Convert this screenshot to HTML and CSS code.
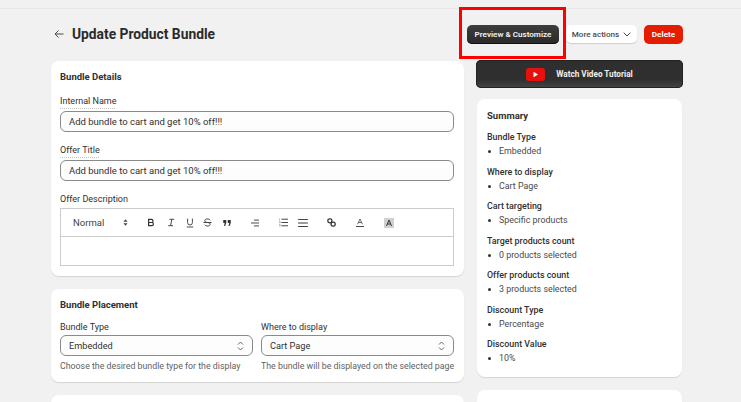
FILE: index.html
```html
<!DOCTYPE html>
<html lang="en">
<head>
<meta charset="utf-8">
<title>Update Product Bundle</title>
<link rel="stylesheet" href="styles.css">
</head>
<body>
<div class="topline"></div>
<main class="page">
  <header class="head">
    <div class="head-left">
      <svg class="back" width="10" height="10" viewBox="0 0 10 10"><path d="M9.500 5H1M4.500 1.500 1 5l3.500 3.500" fill="none" stroke="#4a4a4a" stroke-width="1"/></svg>
      <h1>Update Product Bundle</h1>
    </div>
    <div class="actions">
      <button class="btn dark">Preview &amp; Customize</button>
      <button class="btn plain">More actions
        <svg width="8" height="5" viewBox="0 0 8 5"><path d="M.7.7 4 4l3.300-3.300" fill="none" stroke="#444" stroke-width="1"/></svg>
      </button>
      <button class="btn danger">Delete</button>
    </div>
  </header>
  <div class="columns">
    <div class="col-main">
      <section class="card details">
        <h2>Bundle Details</h2>
        <div class="field">
          <label class="dotted">Internal Name</label>
          <div class="input">Add bundle to cart and get 10% off!!!</div>
        </div>
        <div class="field">
          <label class="dotted">Offer Title</label>
          <div class="input">Add bundle to cart and get 10% off!!!</div>
        </div>
        <div class="field">
          <label>Offer Description</label>
          <div class="editor">
            <div class="toolbar">
              <span class="tb-normal">Normal</span>
              <svg class="tb-sort" width="5" height="7" viewBox="0 0 6 8"><path d="M3 0 5.500 3H.5zM3 8 .5 5h5z" fill="#444"/></svg>
              <svg class="tb-i m12" width="8" height="9" viewBox="0 0 10 10"><path d="M2 1h3.500a2 2 0 0 1 0 4H2zM2 5h4a2 2 0 0 1 0 4H2z" fill="none" stroke="#333" stroke-width="1.500"/></svg>
              <svg class="tb-i m11" width="8" height="9" viewBox="0 0 10 10"><path d="M3 1h6M1.500 9h6M6 1 4.500 9" fill="none" stroke="#333" stroke-width="1.100"/></svg>
              <svg class="tb-i m9" width="8" height="10" viewBox="0 0 10 11"><path d="M2 0v5a3 3 0 0 0 6 0V0M1 10.500h8" fill="none" stroke="#333" stroke-width="1.100"/></svg>
              <svg class="tb-i m11" width="9" height="9" viewBox="0 0 10 10"><path d="M8 2.500C7 .5 2 .5 2 3c0 1 1 1.700 3 2 2 .3 3 1 3 2 0 2.500-5 2.500-6 .5M.5 5h9" fill="none" stroke="#444" stroke-width="1.100"/></svg>
              <svg class="tb-i m20" width="8" height="6" viewBox="0 0 10 8"><path d="M0 0h4v4L2.500 8H1l1-4H0zM6 0h4v4L8.500 8H7l1-4H6z" fill="#333"/></svg>
              <svg class="tb-i m20" width="8" height="8" viewBox="0 0 11 9"><path d="M4 .5h7M0 4.500h11M4 8.500h7" stroke="#333" stroke-width="1.200"/></svg>
              <svg class="tb-i m10" width="9" height="9" viewBox="0 0 11 10"><path d="M3 1h8M3 5h8M3 9h8" stroke="#333" stroke-width="1.100"/><path d="M.5 0v2.500M.2 4h1.300v1.500H.2M.2 7.500h1.300v2H.2" fill="none" stroke="#777" stroke-width=".7"/></svg>
              <svg class="tb-i m19" width="10" height="8" viewBox="0 0 11 9"><path d="M0 .5h11M0 4.500h11M0 8.500h11" stroke="#333" stroke-width="1.100"/></svg>
              <svg class="tb-i m20" width="9" height="9" viewBox="0 0 11 11"><g fill="none" stroke="#333" stroke-width="1.600"><rect x="1" y="1" width="5" height="5" rx="2.200"/><rect x="5" y="5" width="5" height="5" rx="2.200"/></g></svg>
              <svg class="tb-i m20" width="8" height="9" viewBox="0 0 9 10"><path d="M1.800 7 4.500 1l2.700 6M2.800 5h3.400" fill="none" stroke="#444" stroke-width=".9"/><path d="M0 9.500h9" stroke="#333"/></svg>
              <svg class="tb-i" width="10" height="10" viewBox="0 0 10 10"><rect width="10" height="10" fill="#d0d0d0"/><path d="M2.500 8 5 2l2.500 6M3.500 6h3" fill="none" stroke="#333" stroke-width="1"/></svg>
            </div>
            <div class="editor-body"></div>
          </div>
        </div>
      </section>
      <section class="card placement">
        <h2>Bundle Placement</h2>
        <div class="two">
          <div class="field">
            <label>Bundle Type</label>
            <div class="input select">Embedded
              <svg width="7" height="10" viewBox="0 0 7 10"><path d="M1 3.500 3.500 1 6 3.500M1 6.500 3.500 9 6 6.500" fill="none" stroke="#555" stroke-width=".9"/></svg>
            </div>
            <p class="help">Choose the desired bundle type for the display</p>
          </div>
          <div class="field">
            <label>Where to display</label>
            <div class="input select">Cart Page
              <svg width="7" height="10" viewBox="0 0 7 10"><path d="M1 3.500 3.500 1 6 3.500M1 6.500 3.500 9 6 6.500" fill="none" stroke="#555" stroke-width=".9"/></svg>
            </div>
            <p class="help">The bundle will be displayed on the selected page</p>
          </div>
        </div>
      </section>
      <section class="card stub"></section>
    </div>
    <aside class="col-side">
      <button class="video">
        <svg width="19" height="13" viewBox="0 0 19 13"><rect width="19" height="13" rx="3" fill="#e8100c"/><path d="M7.500 3.800v5.400L12 6.500z" fill="#fff"/></svg>
        Watch Video Tutorial
      </button>
      <section class="card summary">
        <h2>Summary</h2>
        <dl>
          <div class="item"><dt>Bundle Type</dt><dd>Embedded</dd></div>
          <div class="item"><dt>Where to display</dt><dd>Cart Page</dd></div>
          <div class="item"><dt>Cart targeting</dt><dd>Specific products</dd></div>
          <div class="item"><dt>Target products count</dt><dd>0 products selected</dd></div>
          <div class="item"><dt>Offer products count</dt><dd>3 products selected</dd></div>
          <div class="item"><dt>Discount Type</dt><dd>Percentage</dd></div>
          <div class="item"><dt>Discount Value</dt><dd>10%</dd></div>
        </dl>
      </section>
      <section class="card stub side-stub"></section>
    </aside>
  </div>
</main>
<div class="highlight"></div>
</body>
</html>
```
FILE: styles.css
```css
* { box-sizing: border-box; }
html, body { height: 100%; }
body {
  margin: 0;
  height: 402px;
  overflow: hidden;
  background: #f1f1f1;
  font-family: Roboto, "Open Sans", sans-serif;
  font-size: 9.500px;
  line-height: 12px;
  color: #303030;
  position: relative;
}
.topline { height: 9px; border-bottom: 1px solid #e8e8e8; }
.page { padding: 0 58px 0 51px; }
.head { display: flex; justify-content: space-between; align-items: center; height: 52px; }
.head-left { display: flex; align-items: center; gap: 8px; margin-left: 3px; margin-top: -2px; }
h1 { margin: 0; font-size: 13.800px; font-weight: 700; color: #2b2b2b; line-height: 18px; }
.actions { display: flex; align-items: center; gap: 7px; margin-top: -2px; }
.btn {
  font-family: inherit;
  font-size: 8.100px;
  font-weight: 600;
  border: 0;
  border-radius: 5px;
  height: 18px;
  padding: 0;
  display: inline-flex;
  align-items: center;
  justify-content: center;
}
.dark { width: 92px; height: 19px; background: linear-gradient(#3d3d3d, #2a2a2a); color: #f2f2f2; box-shadow: inset 0 -1px 0 #111; }
.plain { width: 71px; background: #fff; color: #4a4a4a; gap: 4px; font-weight: 500; box-shadow: 0 1px 1px rgba(0,0,0,.15); }
.danger { width: 39px; height: 19px; background: #e51c00; color: #fff; font-weight: 700; }
.columns { display: flex; align-items: flex-start; gap: 12px; }
.col-main { width: 413px; display: flex; flex-direction: column; gap: 13px; }
.col-side { width: 207px; display: flex; flex-direction: column; align-items: center; }
.card { background: #fff; border-radius: 8px; box-shadow: 0 1px 1px rgba(0,0,0,.12); width: 100%; }
h2 { margin: 0; font-size: 9.500px; font-weight: 700; line-height: 12px; color: #303030; }
.details { height: 215px; padding: 10px 10px 0 9px; }
.field label { display: block; line-height: 12px; font-size: 9px; }
.details .field { margin-top: 12px; }
.dotted { width: max-content; text-decoration: underline dotted #c4c4c4; text-underline-offset: 4px; text-decoration-skip-ink: none; }
.input {
  height: 21px;
  margin-top: 4px;
  border: 1px solid #8a8a8a;
  border-radius: 6px;
  padding: 0 8px;
  display: flex;
  align-items: center;
  justify-content: space-between;
  background: #fdfdfd;
}
.editor { margin-top: 3px; border: 1px solid #ccc; }
.toolbar { height: 28px; border-bottom: 1px solid #ccc; display: flex; align-items: center; padding-left: 12px; color: #444; }
.tb-normal { width: 50px; }
.tb-sort { margin-right: 19px; flex: none; }
.tb-i { flex: none; }
.m9 { margin-right: 9px; }
.m10 { margin-right: 10px; }
.m11 { margin-right: 11px; }
.m12 { margin-right: 12px; }
.m19 { margin-right: 19px; }
.m20 { margin-right: 20px; }
.editor-body { height: 28px; }
.placement { height: 93px; padding: 10px 10px 0 9px; }
.two { display: grid; grid-template-columns: 193px 193px; gap: 8px; margin-top: 10px; }
.placement .input { margin-top: 2px; font-size: 9.200px; }
.select svg { flex: none; }
.help { margin: 4px 0 0; color: #616161; font-size: 8.800px; white-space: nowrap; }
.stub { height: 60px; }
.video {
  width: 207px;
  height: 28px;
  margin-top: -1px;
  border: 0;
  border-radius: 5px;
  background: linear-gradient(#2f2f2f, #2f2f2f 70%, #454545);
  color: #f0f0f0;
  font-family: inherit;
  font-size: 8.200px;
  font-weight: 700;
  display: flex;
  align-items: center;
  justify-content: center;
  gap: 11px;
  box-shadow: 0 0 0 1px #222 inset;
}
.summary { width: 205px; height: 278px; margin-top: 11px; padding: 11px 10px 0; }
.side-stub { width: 205px; margin-top: 13px; }
dl { margin: 9px 0 0; display: flex; flex-direction: column; gap: 8.500px; }
.item { display: flex; flex-direction: column; gap: 2px; font-size: 8.900px; }
dt { font-weight: 500; color: #303030; }
dd { margin: 0; padding-left: 12px; color: #4a4a4a; position: relative; }
dd::before { content: ""; position: absolute; left: 1px; top: 5px; width: 3px; height: 3px; border-radius: 50%; background: #333; }
.highlight { position: absolute; left: 459px; top: 7px; width: 107px; height: 52px; border: 3px solid #f00; }
```
